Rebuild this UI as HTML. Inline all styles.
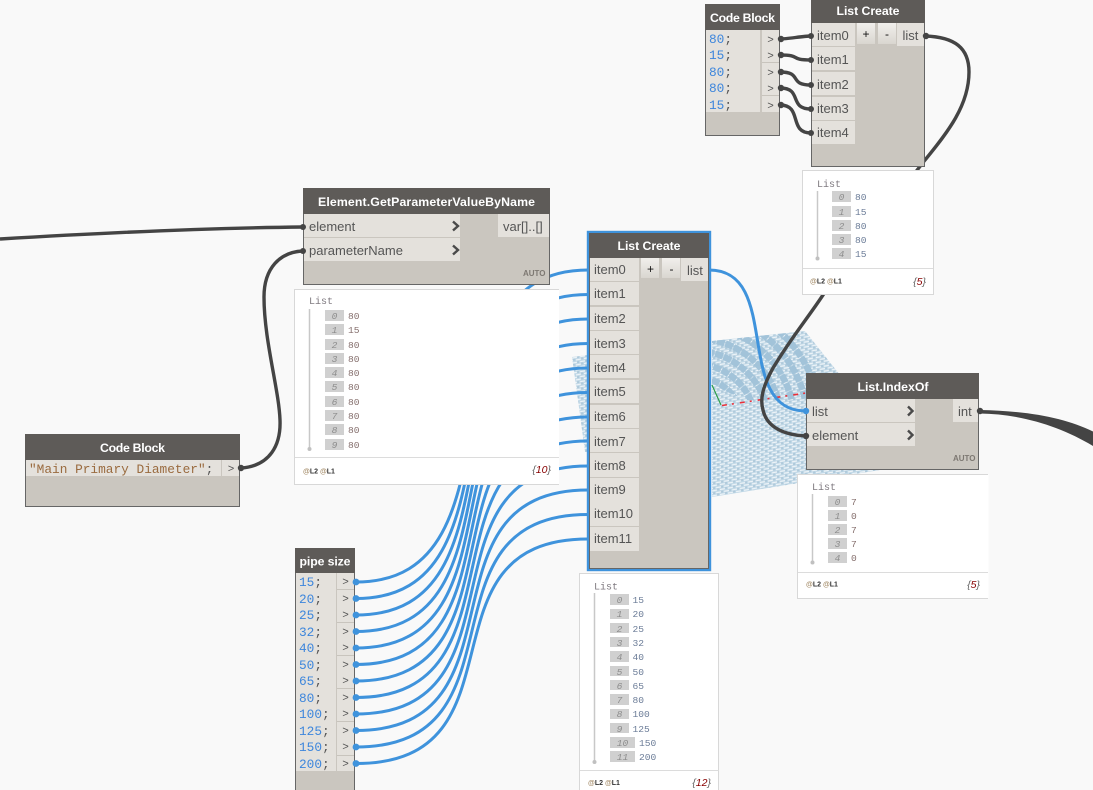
<!DOCTYPE html>
<html><head><meta charset="utf-8"><title>Dynamo graph</title>
<style>
html,body{margin:0;padding:0;background:#f9f9f9;overflow:hidden}
svg{display:block;position:absolute;left:0;top:0}
text{white-space:pre}
.h{font:bold 12.3px "Liberation Sans",sans-serif;fill:#fff;text-anchor:middle}
.p{font:13px "Liberation Sans",sans-serif;fill:#555}
.c{font:12.8px "Liberation Mono",monospace;fill:#3d86dc}
.c tspan{fill:#555}
.s{font:12.8px "Liberation Mono",monospace;fill:#9a6b3f}
.g{font:11px "Liberation Mono",monospace;fill:#555;text-anchor:middle}
.a{font:bold 8px "Liberation Sans",sans-serif;fill:#7d7872}
.l{font:10px "Liberation Mono",monospace;fill:#7f7a80}
.i{font:italic 9.6px "Liberation Mono",monospace;fill:#8d8d8d;text-anchor:middle}
.vb{font:9.6px "Liberation Mono",monospace;fill:#6c7d98}
.vr{font:9.6px "Liberation Mono",monospace;fill:#86706e}
.f{font:bold 7px "Liberation Sans",sans-serif;fill:#333}
.f tspan{fill:#a8906e}
.n{font:italic 10.5px "Liberation Sans",sans-serif;fill:#666;text-anchor:end}
.n tspan{fill:#800}
.b{font:12px "Liberation Sans",sans-serif;fill:#111;text-anchor:middle}
.w{fill:none;stroke-width:3}
.bl{stroke:#3f93dc}
.dk{stroke:#444;stroke-width:3.4}
.hd{fill:#5e5b58}
.body{fill:#cac6bf;stroke:#666;stroke-width:1}
.row{fill:#e4e1dc}
.box{fill:#d0d0d0}
.pv{fill:#fff;stroke:#d8d8d8;stroke-width:1}
.ln{stroke:#dcdcdc;stroke-width:1}
.vl{stroke:#c8c8c8;stroke-width:1.5}
.dot{fill:#c0c0c0}
.ch{fill:none;stroke:#4a4a4a;stroke-width:2.4}
.sep{stroke:#c8c4bd;stroke-width:1}
</style></head><body>
<svg width="1093" height="790" viewBox="0 0 1093 790" xmlns="http://www.w3.org/2000/svg">
<defs>
<linearGradient id="btn" x1="0" y1="0" x2="0" y2="1"><stop offset="0" stop-color="#f1efec"/><stop offset="1" stop-color="#d9d6d0"/></linearGradient>
<pattern id="mesh" width="8" height="5" patternUnits="userSpaceOnUse" patternTransform="skewY(-10)">
<rect width="8" height="5" fill="#bfd7e6"/><path d="M0 1.5H5M4 4H8M0 4H1" stroke="#eef4f8" stroke-width="1.2"/><path d="M6 0V2M2 3V5" stroke="#98b6ca" stroke-width=".8"/>
</pattern>
<clipPath id="top"><polygon points="712,341 805,331 840,375 806,400 745,400 712,385"/></clipPath>
</defs>
<rect width="1093" height="790" fill="#f9f9f9"/>

<!-- 3D mesh -->
<polygon points="712,341 805,331 840,375 880,470 712,497" fill="url(#mesh)"/>
<polygon points="572,357 588,355 588,452 585,452 578,400" fill="url(#mesh)"/>
<g clip-path="url(#top)" fill="none" stroke="#a2c3d9" stroke-width="6.5" stroke-dasharray="8 1">
<circle cx="695" cy="425" r="35"/><circle cx="695" cy="425" r="48"/><circle cx="695" cy="425" r="61"/><circle cx="695" cy="425" r="74"/><circle cx="695" cy="425" r="87"/><circle cx="695" cy="425" r="100"/><circle cx="695" cy="425" r="113"/><circle cx="695" cy="425" r="126"/>
</g>
<path d="M722,405.5L806,393" stroke="#e8303a" stroke-width="1.6" stroke-dasharray="5 5 2 6" fill="none"/>
<path d="M712,385L721,405" stroke="#2e9e4a" stroke-width="1.2" fill="none"/>

<!-- wires -->
<path class="w bl" d="M356,582C532,582 412,270 588,270"/>
<path class="w bl" d="M356,598.5C532,598.5 412,294.5 588,294.5"/>
<path class="w bl" d="M356,615C532,615 412,319 588,319"/>
<path class="w bl" d="M356,631.5C532,631.5 412,343.5 588,343.5"/>
<path class="w bl" d="M356,648C532,648 412,368 588,368"/>
<path class="w bl" d="M356,664.5C532,664.5 412,392.5 588,392.5"/>
<path class="w bl" d="M356,681C532,681 412,417 588,417"/>
<path class="w bl" d="M356,697.5C532,697.5 412,441 588,441"/>
<path class="w bl" d="M356,714C532,714 412,466 588,466"/>
<path class="w bl" d="M356,730.5C532,730.5 412,490 588,490"/>
<path class="w bl" d="M356,747C532,747 412,514.5 588,514.5"/>
<path class="w bl" d="M356,763.5C532,763.5 412,539 588,539"/>
<path class="w bl" d="M709,270C783,270 732,411 806,411"/>
<path class="w dk" d="M925,36C955,37 969,48 969,72C969,105 948,132 925,160C890,205 850,255 823,295C805,322 793,335 773,368C762,388 760,400 763,410C767,428 785,435 806,436"/>
<path class="w dk" d="M0,239C100,233 200,228 303,227"/>
<path class="w dk" d="M241,468C270,466 281,445 280,420C279,390 264,340 264,297C264,268 280,252 303,251"/>
<path class="w dk" d="M780,39C788,39 803,36 811,36"/>
<path class="w dk" d="M780,55C803,55 788,60 811,60"/>
<path class="w dk" d="M780,72C803,72 788,85 811,85"/>
<path class="w dk" d="M780,88C803,88 788,109 811,109"/>
<path class="w dk" d="M780,105C803,105 788,133 811,133"/>
<path d="M980,410C1030,411 1065,418 1093,431.5L1093,446C1060,426 1020,414 980,413.5Z" fill="#444"/>

<!-- Preview: top list -->
<rect class="pv" x="802.5" y="170.5" width="131" height="124"/>
<line class="ln" x1="803" y1="268.5" x2="933" y2="268.5"/>
<text class="l" x="817" y="187">List</text>
<line class="vl" x1="817.5" y1="191" x2="817.5" y2="258"/><circle class="dot" cx="817.5" cy="258.5" r="2"/>
<rect class="box" x="832" y="191" width="19" height="11"/><text class="i" x="841.5" y="200">0</text><text class="vb" x="855" y="200">80</text>
<rect class="box" x="832" y="206" width="19" height="11"/><text class="i" x="841.5" y="215">1</text><text class="vb" x="855" y="215">15</text>
<rect class="box" x="832" y="220" width="19" height="11"/><text class="i" x="841.5" y="229">2</text><text class="vb" x="855" y="229">80</text>
<rect class="box" x="832" y="234" width="19" height="11"/><text class="i" x="841.5" y="243">3</text><text class="vb" x="855" y="243">80</text>
<rect class="box" x="832" y="248" width="19" height="11"/><text class="i" x="841.5" y="257">4</text><text class="vb" x="855" y="257">15</text>
<text class="f" x="810" y="283.5"><tspan>@</tspan>L2 <tspan>@</tspan>L1</text>
<text class="n" x="926" y="285">{<tspan>5</tspan>}</text>

<!-- Preview: GetParameter -->
<rect x="294" y="289" width="265" height="196" fill="#fff"/>
<path d="M559,289.5H294.5V484.5H559" fill="none" stroke="#d8d8d8"/>
<line class="ln" x1="295" y1="457.5" x2="559" y2="457.5"/>
<text class="l" x="309" y="304">List</text>
<line class="vl" x1="309.5" y1="309" x2="309.5" y2="449"/><circle class="dot" cx="309.5" cy="449" r="2"/>
<rect class="box" x="325" y="310" width="19" height="11"/><text class="i" x="334.5" y="319">0</text><text class="vr" x="348" y="319">80</text>
<rect class="box" x="325" y="324" width="19" height="11"/><text class="i" x="334.5" y="333">1</text><text class="vr" x="348" y="333">15</text>
<rect class="box" x="325" y="339" width="19" height="11"/><text class="i" x="334.5" y="348">2</text><text class="vr" x="348" y="348">80</text>
<rect class="box" x="325" y="353" width="19" height="11"/><text class="i" x="334.5" y="362">3</text><text class="vr" x="348" y="362">80</text>
<rect class="box" x="325" y="367" width="19" height="11"/><text class="i" x="334.5" y="376">4</text><text class="vr" x="348" y="376">80</text>
<rect class="box" x="325" y="381" width="19" height="11"/><text class="i" x="334.5" y="390">5</text><text class="vr" x="348" y="390">80</text>
<rect class="box" x="325" y="396" width="19" height="11"/><text class="i" x="334.5" y="405">6</text><text class="vr" x="348" y="405">80</text>
<rect class="box" x="325" y="410" width="19" height="11"/><text class="i" x="334.5" y="419">7</text><text class="vr" x="348" y="419">80</text>
<rect class="box" x="325" y="424" width="19" height="11"/><text class="i" x="334.5" y="433">8</text><text class="vr" x="348" y="433">80</text>
<rect class="box" x="325" y="439" width="19" height="11"/><text class="i" x="334.5" y="448">9</text><text class="vr" x="348" y="448">80</text>
<text class="f" x="303" y="473.5"><tspan>@</tspan>L2 <tspan>@</tspan>L1</text>
<text class="n" x="551" y="473">{<tspan>10</tspan>}</text>

<!-- Preview: IndexOf -->
<rect class="pv" x="797.5" y="474.5" width="191" height="124" style="stroke:none"/>
<path d="M988,474.5H797.5V598.5H988" fill="none" stroke="#d8d8d8"/>
<line class="ln" x1="798" y1="572.5" x2="988" y2="572.5"/>
<text class="l" x="812" y="490">List</text>
<line class="vl" x1="812.5" y1="494" x2="812.5" y2="562"/><circle class="dot" cx="812.5" cy="562.5" r="2"/>
<rect class="box" x="828" y="496" width="19" height="11"/><text class="i" x="837.5" y="505">0</text><text class="vr" x="851" y="505">7</text>
<rect class="box" x="828" y="510" width="19" height="11"/><text class="i" x="837.5" y="519">1</text><text class="vr" x="851" y="519">0</text>
<rect class="box" x="828" y="524" width="19" height="11"/><text class="i" x="837.5" y="533">2</text><text class="vr" x="851" y="533">7</text>
<rect class="box" x="828" y="538" width="19" height="11"/><text class="i" x="837.5" y="547">3</text><text class="vr" x="851" y="547">7</text>
<rect class="box" x="828" y="552" width="19" height="11"/><text class="i" x="837.5" y="561">4</text><text class="vr" x="851" y="561">0</text>
<text class="f" x="806" y="586.5"><tspan>@</tspan>L2 <tspan>@</tspan>L1</text>
<text class="n" x="980" y="588">{<tspan>5</tspan>}</text>

<!-- Preview: center -->
<rect class="pv" x="579.5" y="573.5" width="139" height="218"/>
<line class="ln" x1="580" y1="770.5" x2="719" y2="770.5"/>
<text class="l" x="594" y="589.5">List</text>
<line class="vl" x1="594.5" y1="593" x2="594.5" y2="761"/><circle class="dot" cx="594.5" cy="762" r="2"/>
<rect class="box" x="610" y="594" width="19" height="11"/><text class="i" x="619.5" y="603">0</text><text class="vb" x="632.5" y="603">15</text>
<rect class="box" x="610" y="609" width="19" height="10"/><text class="i" x="619.5" y="617">1</text><text class="vb" x="632.5" y="617">20</text>
<rect class="box" x="610" y="623" width="19" height="10"/><text class="i" x="619.5" y="632">2</text><text class="vb" x="632.5" y="632">25</text>
<rect class="box" x="610" y="637" width="19" height="10"/><text class="i" x="619.5" y="646">3</text><text class="vb" x="632.5" y="646">32</text>
<rect class="box" x="610" y="651" width="19" height="11"/><text class="i" x="619.5" y="660">4</text><text class="vb" x="632.5" y="660">40</text>
<rect class="box" x="610" y="666" width="19" height="10"/><text class="i" x="619.5" y="675">5</text><text class="vb" x="632.5" y="675">50</text>
<rect class="box" x="610" y="680" width="19" height="10"/><text class="i" x="619.5" y="689">6</text><text class="vb" x="632.5" y="689">65</text>
<rect class="box" x="610" y="694" width="19" height="11"/><text class="i" x="619.5" y="703">7</text><text class="vb" x="632.5" y="703">80</text>
<rect class="box" x="610" y="709" width="19" height="10"/><text class="i" x="619.5" y="717">8</text><text class="vb" x="632.5" y="717">100</text>
<rect class="box" x="610" y="723" width="19" height="10"/><text class="i" x="619.5" y="732">9</text><text class="vb" x="632.5" y="732">125</text>
<rect class="box" x="610" y="737" width="25" height="11"/><text class="i" x="622.5" y="746">10</text><text class="vb" x="639" y="746">150</text>
<rect class="box" x="610" y="751" width="25" height="11"/><text class="i" x="622.5" y="760">11</text><text class="vb" x="639" y="760">200</text>
<text class="f" x="588" y="785"><tspan>@</tspan>L2 <tspan>@</tspan>L1</text>
<text class="n" x="711" y="786">{<tspan>12</tspan>}</text>

<!-- Top Code Block -->
<rect class="body" x="705.5" y="4.5" width="74" height="131"/>
<rect class="hd" x="705" y="4" width="75" height="26"/>
<text class="h" x="742.5" y="22" textLength="65">Code Block</text>
<rect class="row" x="706" y="30" width="54" height="82"/>
<rect class="row" x="762" y="30" width="17" height="82"/>
<line class="sep" x1="762" y1="62.5" x2="779" y2="62.5"/><line class="sep" x1="762" y1="95.5" x2="779" y2="95.5"/>
<text class="c" x="709" y="43">80<tspan>;</tspan></text>
<text class="c" x="709" y="59">15<tspan>;</tspan></text>
<text class="c" x="709" y="76">80<tspan>;</tspan></text>
<text class="c" x="709" y="92">80<tspan>;</tspan></text>
<text class="c" x="709" y="109">15<tspan>;</tspan></text>
<text class="g" x="770.5" y="43">&gt;</text><text class="g" x="770.5" y="59">&gt;</text><text class="g" x="770.5" y="76">&gt;</text><text class="g" x="770.5" y="92">&gt;</text><text class="g" x="770.5" y="109">&gt;</text>
<g fill="#444"><circle cx="781" cy="39" r="3.2"/><circle cx="781" cy="55" r="3.2"/><circle cx="781" cy="72" r="3.2"/><circle cx="781" cy="88" r="3.2"/><circle cx="781" cy="105" r="3.2"/></g>

<!-- Top List Create -->
<rect class="body" x="811.5" y="-2" width="113" height="168.5"/>
<rect class="hd" x="811" y="0" width="114" height="23"/>
<text class="h" x="868" y="15" textLength="63">List Create</text>
<rect class="row" x="812" y="23" width="43" height="23"/><rect class="row" x="812" y="47" width="43" height="23"/><rect class="row" x="812" y="72" width="43" height="23"/><rect class="row" x="812" y="97" width="43" height="23"/><rect class="row" x="812" y="121" width="43" height="23"/>
<text class="p" x="817" y="40">item0</text><text class="p" x="817" y="64">item1</text><text class="p" x="817" y="89">item2</text><text class="p" x="817" y="113">item3</text><text class="p" x="817" y="137">item4</text>
<rect x="857" y="23" width="18" height="21" fill="url(#btn)"/><rect x="878" y="23" width="18" height="21" fill="url(#btn)"/>
<text class="b" x="866" y="38">+</text><text class="b" x="887" y="38">-</text>
<rect class="row" x="897" y="23" width="27" height="23"/>
<text class="p" x="902.5" y="40">list</text>
<g fill="#444"><circle cx="811" cy="36" r="3"/><circle cx="811" cy="60" r="3"/><circle cx="811" cy="85" r="3"/><circle cx="811" cy="109" r="3"/><circle cx="811" cy="133" r="3"/><circle cx="926" cy="36" r="3.2"/></g>

<!-- Element node -->
<rect class="body" x="303.5" y="188.5" width="246" height="96"/>
<rect class="hd" x="303" y="188" width="247" height="26"/>
<text class="h" x="426.5" y="206" textLength="217">Element.GetParameterValueByName</text>
<rect class="row" x="304" y="214" width="156" height="23"/><rect class="row" x="304" y="238" width="156" height="23"/>
<rect class="row" x="498" y="214" width="51" height="23"/>
<text class="p" x="309" y="231">element</text><text class="p" x="309" y="255">parameterName</text>
<text class="p" x="503" y="231">var[]..[]</text>
<path class="ch" d="M453,221.5L458,226L453,230.5"/><path class="ch" d="M453,245.5L458,250L453,254.5"/>
<text class="a" x="523" y="276">AUTO</text>
<g fill="#444"><circle cx="303" cy="227" r="3"/><circle cx="303" cy="251" r="3"/></g>

<!-- Left Code Block -->
<rect class="body" x="25.5" y="434.5" width="214" height="72"/>
<rect class="hd" x="25" y="434" width="215" height="26"/>
<text class="h" x="132.5" y="452" textLength="65">Code Block</text>
<rect class="row" x="26" y="460" width="195" height="16"/><rect class="row" x="222" y="460" width="17" height="16"/>
<text class="s" x="29" y="473">"Main Primary Diameter"<tspan fill="#555">;</tspan></text>
<text class="g" x="231" y="472">&gt;</text>
<circle cx="241" cy="468" r="3.2" fill="#444"/>

<!-- Pipe size -->
<rect class="body" x="295.5" y="548.5" width="59" height="250"/>
<rect class="hd" x="295" y="548" width="60" height="25"/>
<text class="h" x="325" y="565.5" textLength="51">pipe size</text>
<rect class="row" x="296" y="573" width="40" height="198"/><rect class="row" x="337" y="573" width="17" height="198"/>
<line class="sep" x1="337" y1="589.5" x2="354" y2="589.5"/><line class="sep" x1="337" y1="622.5" x2="354" y2="622.5"/><line class="sep" x1="337" y1="655.5" x2="354" y2="655.5"/><line class="sep" x1="337" y1="688.5" x2="354" y2="688.5"/><line class="sep" x1="337" y1="721.5" x2="354" y2="721.5"/><line class="sep" x1="337" y1="755.5" x2="354" y2="755.5"/>
<text class="c" x="299" y="586">15<tspan>;</tspan></text>
<text class="c" x="299" y="603">20<tspan>;</tspan></text>
<text class="c" x="299" y="619">25<tspan>;</tspan></text>
<text class="c" x="299" y="636">32<tspan>;</tspan></text>
<text class="c" x="299" y="652">40<tspan>;</tspan></text>
<text class="c" x="299" y="669">50<tspan>;</tspan></text>
<text class="c" x="299" y="685">65<tspan>;</tspan></text>
<text class="c" x="299" y="702">80<tspan>;</tspan></text>
<text class="c" x="299" y="718">100<tspan>;</tspan></text>
<text class="c" x="299" y="735">125<tspan>;</tspan></text>
<text class="c" x="299" y="751">150<tspan>;</tspan></text>
<text class="c" x="299" y="768">200<tspan>;</tspan></text>
<text class="g" x="345.5" y="585">&gt;</text><text class="g" x="345.5" y="602">&gt;</text><text class="g" x="345.5" y="618">&gt;</text><text class="g" x="345.5" y="635">&gt;</text><text class="g" x="345.5" y="651">&gt;</text><text class="g" x="345.5" y="668">&gt;</text><text class="g" x="345.5" y="684">&gt;</text><text class="g" x="345.5" y="701">&gt;</text><text class="g" x="345.5" y="717">&gt;</text><text class="g" x="345.5" y="734">&gt;</text><text class="g" x="345.5" y="750">&gt;</text><text class="g" x="345.5" y="767">&gt;</text>
<g fill="#3f93dc"><circle cx="356" cy="582" r="3.4"/><circle cx="356" cy="598.5" r="3.4"/><circle cx="356" cy="615" r="3.4"/><circle cx="356" cy="631.5" r="3.4"/><circle cx="356" cy="648" r="3.4"/><circle cx="356" cy="664.5" r="3.4"/><circle cx="356" cy="681" r="3.4"/><circle cx="356" cy="697.5" r="3.4"/><circle cx="356" cy="714" r="3.4"/><circle cx="356" cy="730.5" r="3.4"/><circle cx="356" cy="747" r="3.4"/><circle cx="356" cy="763.5" r="3.4"/></g>

<!-- Center List Create -->
<rect x="588" y="232" width="122" height="338" fill="#cac6bf" stroke="#3f93dc" stroke-width="2.4"/>
<rect x="589.5" y="233.5" width="119" height="335" fill="none" stroke="#666" stroke-width="1"/>
<rect class="hd" x="589" y="233" width="120" height="25"/>
<text class="h" x="649" y="250" textLength="63">List Create</text>
<rect class="row" x="590" y="258" width="49" height="23"/><rect class="row" x="590" y="282" width="49" height="23"/><rect class="row" x="590" y="307" width="49" height="23"/><rect class="row" x="590" y="331" width="49" height="23"/><rect class="row" x="590" y="355" width="49" height="23"/><rect class="row" x="590" y="380" width="49" height="23"/><rect class="row" x="590" y="405" width="49" height="23"/><rect class="row" x="590" y="429" width="49" height="23"/><rect class="row" x="590" y="453" width="49" height="24"/><rect class="row" x="590" y="478" width="49" height="24"/><rect class="row" x="590" y="502" width="49" height="24"/><rect class="row" x="590" y="527" width="49" height="24"/>
<text class="p" x="594" y="274">item0</text><text class="p" x="594" y="298">item1</text><text class="p" x="594" y="323">item2</text><text class="p" x="594" y="348">item3</text><text class="p" x="594" y="372">item4</text><text class="p" x="594" y="396">item5</text><text class="p" x="594" y="421">item6</text><text class="p" x="594" y="446">item7</text><text class="p" x="594" y="470">item8</text><text class="p" x="594" y="494">item9</text><text class="p" x="594" y="518">item10</text><text class="p" x="594" y="543">item11</text>
<rect x="641" y="258" width="18" height="20" fill="url(#btn)"/><rect x="662" y="258" width="18" height="20" fill="url(#btn)"/>
<text class="b" x="650.5" y="273">+</text><text class="b" x="671.5" y="273">-</text>
<rect class="row" x="681" y="258" width="27" height="23"/>
<text class="p" x="687" y="275">list</text>

<!-- List.IndexOf -->
<rect class="body" x="806.5" y="373.5" width="172" height="96"/>
<rect class="hd" x="806" y="373" width="173" height="26"/>
<text class="h" x="893" y="391" textLength="71">List.IndexOf</text>
<rect class="row" x="807" y="399" width="108" height="23"/><rect class="row" x="807" y="423" width="108" height="23"/>
<rect class="row" x="953" y="399" width="25" height="23"/>
<text class="p" x="812" y="416">list</text><text class="p" x="812" y="440">element</text><text class="p" x="958" y="416">int</text>
<path class="ch" d="M908,406.5L912.5,411L908,415.5"/><path class="ch" d="M908,430.5L912.5,435L908,439.5"/>
<text class="a" x="953" y="461">AUTO</text>
<circle cx="806" cy="411" r="3.2" fill="#3f93dc"/><circle cx="806" cy="436" r="3.2" fill="#444"/><circle cx="980" cy="411" r="3.2" fill="#444"/>
</svg>
</body></html>
